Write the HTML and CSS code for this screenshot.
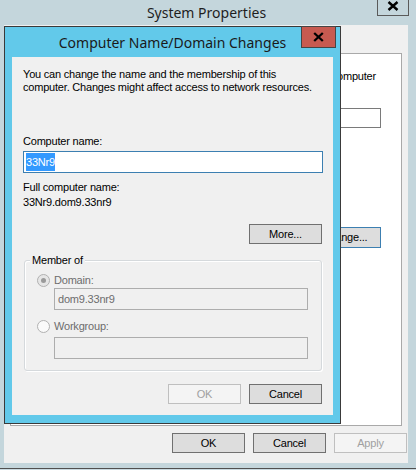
FILE: index.html
```html
<!DOCTYPE html>
<html>
<head>
<meta charset="utf-8">
<link rel="stylesheet" href="styles.css">
</head>
<body>
<div class="desktop">
  <div class="win">
    <div class="win-title">
      <span class="win-title-text">System Properties</span>
      <div class="win-close"><svg width="12" height="10" viewBox="0 0 12 10"><path d="M1.5 1 L10.5 9 M10.5 1 L1.5 9" stroke="#000" stroke-width="2.4" fill="none"/></svg></div>
    </div>
    <div class="win-panel">
      <div class="tabpage">
        <div class="tp-text">computer</div>
        <div class="tp-input"></div>
        <div class="btn tp-change">Change...</div>
      </div>
      <div class="btn-row win-buttons">
        <div class="btn">OK</div>
        <div class="btn">Cancel</div>
        <div class="btn disabled">Apply</div>
      </div>
    </div>
  </div>

  <div class="dlg">
    <div class="dlg-title">Computer Name/Domain Changes</div>
    <div class="dlg-close"><svg width="11" height="10" viewBox="0 0 11 10"><path d="M1.2 1 L9.8 9 M9.8 1 L1.2 9" stroke="#000" stroke-width="2.3" fill="none"/></svg></div>
    <div class="dlg-body">
      <p class="intro">You can change the name and the membership of this<br>computer. Changes might affect access to network resources.</p>
      <div class="label name-label">Computer name:</div>
      <div class="textbox focused"><span class="sel">33Nr9</span></div>
      <div class="label full-label">Full computer name:</div>
      <div class="label full-value">33Nr9.dom9.33nr9</div>
      <div class="more-row"><div class="btn">More...</div></div>
      <div class="group">
        <div class="legend">Member of</div>
        <div class="radio-row domain-row"><span class="radio checked"></span><span class="radio-label">Domain:</span></div>
        <div class="textbox disabled-box">dom9.33nr9</div>
        <div class="radio-row wg-row"><span class="radio"></span><span class="radio-label">Workgroup:</span></div>
        <div class="textbox disabled-box wg-box"></div>
      </div>
      <div class="btn-row dlg-buttons">
        <div class="btn disabled">OK</div>
        <div class="btn">Cancel</div>
      </div>
    </div>
  </div>
</div>
</body>
</html>
```

FILE: styles.css
```css
html, body {
  margin: 0;
  padding: 0;
  background: #cbdae0;
}
body {
  font-family: "Liberation Sans", Arial, sans-serif;
  font-size: 11px;
  line-height: 13px;
  letter-spacing: -0.2px;
  color: #000;
}
.desktop {
  position: relative;
  width: 416px;
  height: 470px;
  overflow: hidden;
}
.win {
  width: 416px;
  height: 468px;
  background: #c4d6dc;
  border-bottom: 1px solid #505050;
}
.win-title {
  position: relative;
  height: 25px;
  display: flex;
  justify-content: center;
  align-items: center;
  padding-right: 3px;
  box-sizing: border-box;
}
.win-title-text {
  font-family: "Noto Sans", "Open Sans", sans-serif;
  font-size: 14px;
  letter-spacing: 0;
  color: #1e1e1e;
  line-height: 20px;
}
.win-close {
  position: absolute;
  left: 377px;
  top: -1px;
  width: 32px;
  height: 17px;
  box-sizing: border-box;
  border: 1px solid #5a5a5a;
  display: flex;
  justify-content: center;
  align-items: center;
  padding-bottom: 3px;
}
.win-panel {
  margin-left: 4px;
  width: 404px;
  height: 438px;
  background: #f0f0f0;
  padding: 28px 0 0 6px;
  box-sizing: border-box;
}
.tabpage {
  width: 392px;
  height: 373px;
  box-sizing: border-box;
  background: #fff;
  border: 1px solid #a9a9a9;
  display: flex;
  flex-direction: column;
  align-items: flex-end;
  padding-right: 20px;
}
.tp-text {
  margin-top: 16px;
  padding-right: 5px;
  white-space: nowrap;
}
.tp-input {
  margin-top: 25px;
  width: 200px;
  height: 20px;
  box-sizing: border-box;
  border: 1px solid #7a7a7a;
}
.btn {
  width: 73px;
  height: 20px;
  box-sizing: border-box;
  border: 1px solid #707070;
  background: #dddddd;
  text-align: center;
  line-height: 18px;
  color: #000;
}
.btn.disabled {
  border-color: #bfbfbf;
  background: #f4f4f4;
  color: #a0a0a0;
}
.btn.tp-change {
  margin-top: 99px;
  height: 21px;
  border-color: #3c7fb1;
  line-height: 19px;
}
.btn-row {
  display: flex;
  justify-content: flex-end;
  gap: 8px;
}
.win-buttons {
  margin-top: 7px;
  padding-right: 1px;
}

/* dialog */
.dlg {
  position: absolute;
  left: 4px;
  top: 26px;
  width: 337px;
  height: 398px;
  box-sizing: border-box;
  border: 1px solid #3a3a3a;
  background: #62c9ea;
  padding: 0 7px 8px 7px;
}
.dlg-title {
  height: 30px;
  display: flex;
  justify-content: center;
  align-items: center;
  font-family: "Noto Sans", "Open Sans", sans-serif;
  font-size: 14px;
  letter-spacing: 0;
  color: #1a1a1a;
}
.dlg-close {
  position: absolute;
  left: 296px;
  top: -1px;
  width: 35px;
  height: 22px;
  box-sizing: border-box;
  background: #c75a50;
  border: 1px solid #454545;
  display: flex;
  justify-content: center;
  align-items: center;
}
.dlg-body {
  height: 358px;
  background: #f0f0f0;
  padding: 11px 11px 0 11px;
  box-sizing: border-box;
}
.intro {
  margin: 0;
  white-space: nowrap;
}
.label {
  height: 13px;
  white-space: nowrap;
}
.name-label {
  margin-top: 41px;
}
.textbox {
  margin-top: 3px;
  height: 22px;
  box-sizing: border-box;
  border: 1px solid #a9a9a9;
  background: #fff;
  padding: 1px 2px;
}
.textbox.focused {
  border-color: #3c7fb1;
  width: 300px;
}
.sel {
  display: inline-block;
  height: 18px;
  line-height: 18px;
  background: #3399ff;
  color: #fff;
}
.full-label {
  margin-top: 8px;
}
.full-value {
  margin-top: 2px;
}
.more-row {
  display: flex;
  justify-content: flex-end;
  margin-top: 15px;
}
.group {
  margin: 16px 0 0 1px;
  width: 298px;
  height: 111px;
  box-sizing: border-box;
  border: 1px solid #d5d9dc;
  border-radius: 3px;
  box-shadow: 1px 1px 0 #fff, inset 1px 1px 0 #fff;
  padding: 0 0 0 12px;
}
.legend {
  display: block;
  width: fit-content;
  margin: -7px 0 0 -7px;
  padding: 0 2px;
  background: #f0f0f0;
  height: 13px;
}
.radio-row {
  display: flex;
  align-items: center;
  height: 14px;
  color: #6d6d6d;
}
.domain-row {
  margin-top: 6px;
}
.wg-row {
  margin-top: 9px;
}
.radio {
  width: 13px;
  height: 13px;
  box-sizing: border-box;
  border-radius: 50%;
  border: 1px solid #b1b1b1;
  background: #fafafa;
  margin-right: 4px;
  display: flex;
  justify-content: center;
  align-items: center;
}
.radio.checked {
  background: #e6e6e6;
}
.radio.checked::after {
  content: "";
  width: 5px;
  height: 5px;
  border-radius: 50%;
  background: #9a9a9a;
}
.textbox.disabled-box {
  margin: 1px 0 0 17px;
  width: 254px;
  background: #f0f0f0;
  border-color: #adadad;
  color: #6d6d6d;
  line-height: 18px;
  padding: 1px 3px;
}
.textbox.wg-box {
  margin-top: 4px;
}
.dlg-buttons {
  margin-top: 13px;
}
```
